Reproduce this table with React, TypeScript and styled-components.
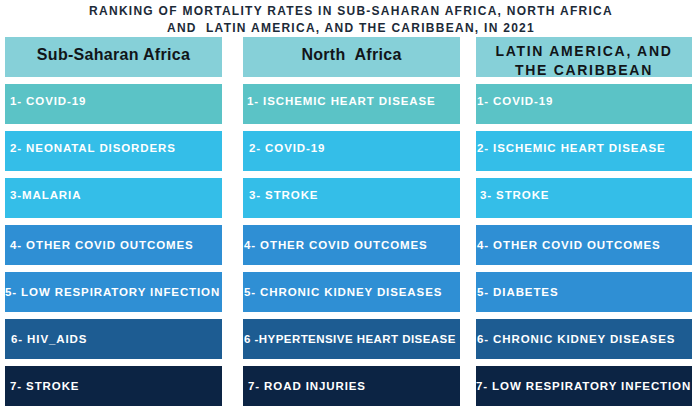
import React from "react";
import styled, { createGlobalStyle } from "styled-components";

const Global = createGlobalStyle`
  html, body { margin: 0; padding: 0; background: #ffffff; }
  body { font-family: "Liberation Sans", Arial, sans-serif; }
`;

const Page = styled.div`
  width: 700px;
  height: 407px;
  overflow: hidden;
  background: #ffffff;
`;

const Title = styled.h1`
  margin: 0;
  padding-top: 3px;
  padding-left: 2px;
  font-size: 12px;
  line-height: 17px;
  font-weight: 700;
  letter-spacing: 1.27px;
  text-align: center;
  color: #1c2a38;
  white-space: pre;
`;

const Board = styled.div`
  display: flex;
  padding-left: 5px;
`;

const Column = styled.div<{ $offset: number; $width: number }>`
  display: flex;
  flex-direction: column;
  gap: 7px;
  width: ${(p) => p.$width}px;
  margin-left: ${(p) => p.$offset}px;
`;

const Header = styled.div<{ $caps?: boolean }>`
  height: 40px;
  background: #86d0d8;
  display: flex;
  align-items: center;
  justify-content: center;
  text-align: center;
  color: #111518;
  font-weight: 700;
  white-space: pre;
  font-size: ${(p) => (p.$caps ? "14px" : "16px")};
  letter-spacing: ${(p) => (p.$caps ? "1.7px" : "0.3px")};
  line-height: ${(p) => (p.$caps ? "19px" : "20px")};
  padding-top: ${(p) => (p.$caps ? "7px" : "0")};
  padding-bottom: ${(p) => (p.$caps ? "0" : "4px")};
  box-sizing: border-box;
`;

const Cell = styled.div<{ $bg: string; $indent: number; $lift: number; $spacing: number }>`
  height: 40px;
  box-sizing: border-box;
  background: ${(p) => p.$bg};
  display: flex;
  align-items: center;
  padding-left: ${(p) => p.$indent}px;
  padding-bottom: ${(p) => p.$lift}px;
  color: #ffffff;
  font-size: 11.5px;
  font-weight: 700;
  letter-spacing: ${(p) => p.$spacing}px;
  white-space: pre;
  overflow: visible;
`;

const colors = ["#5bc3c6", "#34bee8", "#34bee8", "#2f8fd4", "#2f8fd4", "#1d5c92", "#0c2444"];
const lifts = [7, 6, 6, 0, 0, 0, -2];

type Item = { text: string; indent: number; spacing?: number };

type Col = {
  header: string;
  caps?: boolean;
  offset: number;
  width: number;
  items: Item[];
};

const columns: Col[] = [
  {
    header: "Sub-Saharan Africa",
    offset: 0,
    width: 217,
    items: [
      { text: "1- COVID-19", indent: 5 },
      { text: "2- NEONATAL DISORDERS", indent: 5 },
      { text: "3-MALARIA", indent: 5 },
      { text: "4- OTHER COVID OUTCOMES", indent: 5 },
      { text: "5- LOW RESPIRATORY INFECTION", indent: 0 },
      { text: "6- HIV_AIDS", indent: 6 },
      { text: "7- STROKE", indent: 5 },
    ],
  },
  {
    header: "North  Africa",
    offset: 21,
    width: 217,
    items: [
      { text: "1- ISCHEMIC HEART DISEASE", indent: 4 },
      { text: "2- COVID-19", indent: 6 },
      { text: "3- STROKE", indent: 6 },
      { text: "4- OTHER COVID OUTCOMES", indent: 1 },
      { text: "5- CHRONIC KIDNEY DISEASES", indent: 1 },
      { text: "6 -HYPERTENSIVE HEART DISEASE", indent: 1, spacing: 0.45 },
      { text: "7- ROAD INJURIES", indent: 5 },
    ],
  },
  {
    header: "LATIN AMERICA, AND\nTHE CARIBBEAN",
    caps: true,
    offset: 16,
    width: 216,
    items: [
      { text: "1- COVID-19", indent: 1 },
      { text: "2- ISCHEMIC HEART DISEASE", indent: 1 },
      { text: "3- STROKE", indent: 4 },
      { text: "4- OTHER COVID OUTCOMES", indent: 1 },
      { text: "5- DIABETES", indent: 1 },
      { text: "6- CHRONIC KIDNEY DISEASES", indent: 1 },
      { text: "7- LOW RESPIRATORY INFECTION", indent: 0 },
    ],
  },
];

export default function App() {
  return (
    <Page>
      <Global />
      <Title>
        {"RANKING OF MORTALITY RATES IN SUB-SAHARAN AFRICA, NORTH AFRICA\nAND  LATIN AMERICA, AND THE CARIBBEAN, IN 2021"}
      </Title>
      <Board>
        {columns.map((c) => (
          <Column key={c.header} $offset={c.offset} $width={c.width}>
            <Header $caps={c.caps}>{c.header}</Header>
            {c.items.map((it, i) => (
              <Cell
                key={it.text}
                $bg={colors[i]}
                $indent={it.indent}
                $lift={lifts[i]}
                $spacing={it.spacing ?? 0.9}
              >
                {it.text}
              </Cell>
            ))}
          </Column>
        ))}
      </Board>
    </Page>
  );
}
